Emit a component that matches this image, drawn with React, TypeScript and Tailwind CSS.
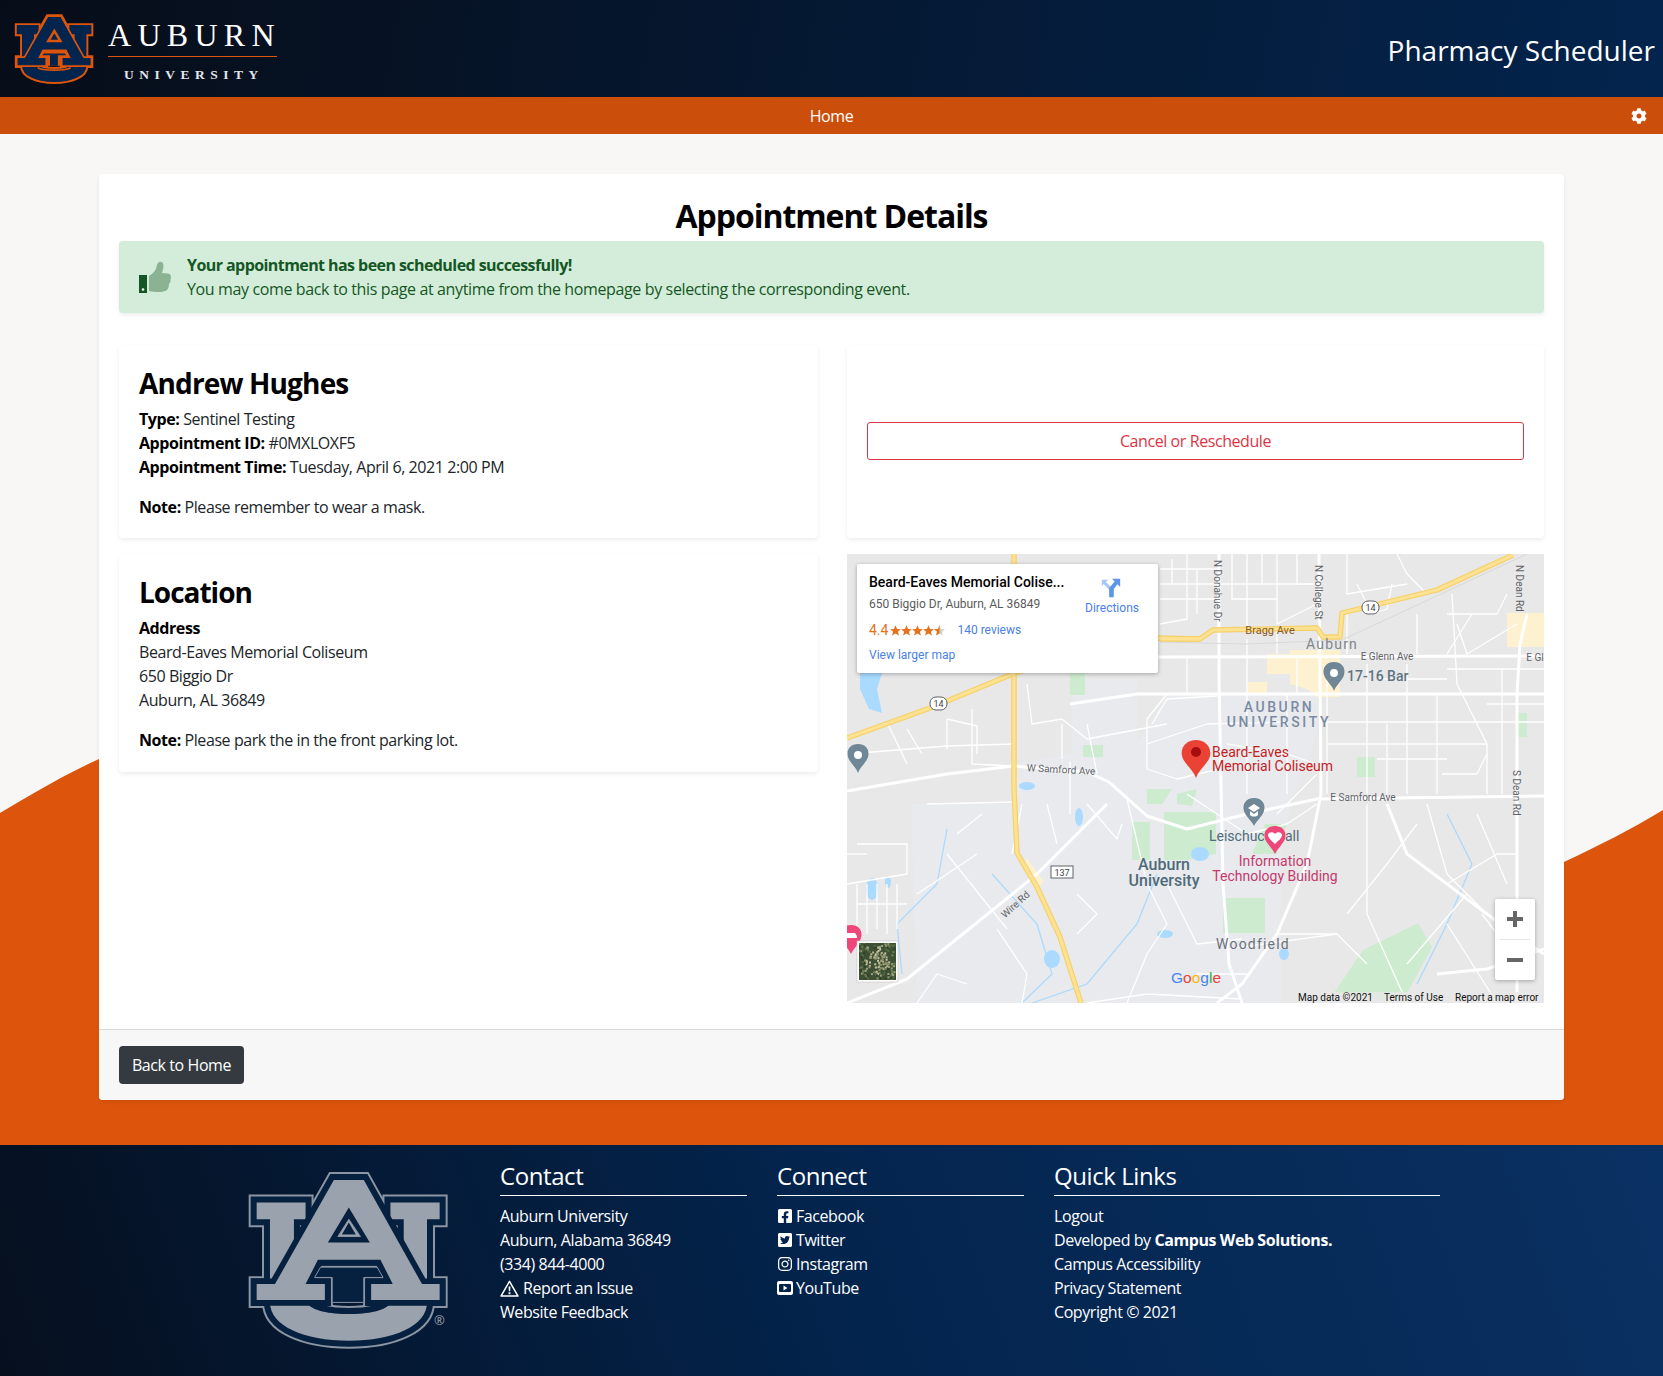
import React from "react";
import { FaCog, FaFacebookSquare, FaTwitterSquare, FaInstagram } from "react-icons/fa";

const FONT = "font-['Open_Sans','Noto_Sans',sans-serif]";

function AuLogo({ fill, band, line, className, small }: { fill: string; band: string; line: string; className: string; small?: boolean }) {
  const u1 = "M78,190 L225,190 L225,240 L190,240 L190,440 L118,440 L118,240 L78,240 Z";
  const u2 = "M480,190 L628,190 L628,240 L590,240 L590,440 L520,440 L520,240 L480,240 Z";
  const bowl = "M118,490 L230,490 C240,515 300,525 355,525 C410,525 470,515 480,490 L590,490 C590,560 490,605 355,605 C220,605 118,560 118,490 Z";
  const a = "M310,122 L400,122 L575,435 L628,435 L628,483 L422,483 L422,435 L487,435 L450,362 L262,362 L225,435 L283,435 L283,483 L78,483 L78,435 L133,435 Z";
  return (
    <svg viewBox="50 95 605 535" className={className}>
      <g stroke={line} strokeWidth={small ? 50 : 48} strokeLinejoin="miter" fill={line}>
        <path d={u1} /><path d={u2} /><path d={bowl} /><path d={a} />
      </g>
      <g stroke={band} strokeWidth={small ? 20 : 36} strokeLinejoin="miter" fill={band}>
        <path d={u1} /><path d={u2} /><path d={bowl} /><path d={a} />
      </g>
      <path d={u1} fill={fill} /><path d={u2} fill={fill} /><path d={bowl} fill={fill} />
      {small && <path d={a} fill={line} stroke={line} strokeWidth="34" strokeLinejoin="miter" />}
      <path d={a} fill={fill} stroke={small ? fill : band} strokeWidth={small ? 8 : 34} paintOrder="stroke" strokeLinejoin="miter" />
      {small ? (
        <>
          <path d="M355,205 L292,310 L418,310 Z" fill={line} />
          <path d="M355,243 L326,292 L384,292 Z" fill={fill} />
          <path d="M262,378 L448,378 L470,425 L400,425 L400,490 L305,490 L305,425 L240,425 Z" fill={line} />
          <path d="M275,396 L436,396 L445,410 L382,410 L382,490 L322,490 L322,410 L265,410 Z" fill={fill} />
          <path d="M228,505 C260,530 450,530 480,505" fill="none" stroke={line} strokeWidth="12" />
        </>
      ) : (
        <>
          <path d="M355,205 L292,310 L418,310 Z" fill={band} />
          <path d="M355,240 L322,292 L390,292 Z" fill={fill} stroke={line} strokeWidth="3" />
          <path d="M355,250 L334,286 L376,286 Z" fill={band} />
          <path d="M270,384 L440,384 L458,415 L400,415 L400,490 L305,490 L305,415 L252,415 Z" fill={band} stroke={line} strokeWidth="3" />
        </>
      )}
    </svg>
  );
}

const thick = [
  "313,85 353,85 366,76 470,74 476,83 493,83 495,59 590,36 666,1",
  "0,184 83,154 168,119 240,96 311,84 353,85",
  "167,0 167,235 170,299 190,333 213,383 234,449",
];
const wide = [
  "372,0 372,120 374,230 376,330 382,410 395,449",
  "472,0 473,120 474,240 460,310 430,380 395,430 370,449",
  "0,237 100,220 167,212 240,218 262,228 300,262 340,275 400,260 470,245 697,242",
  "223,150 290,140 340,140 697,140",
  "311,103 697,102",
  "0,449 60,425 168,338 190,320 260,250",
  "540,250 560,300 620,345 660,375 697,400",
  "590,420 640,415 697,395",
  "680,60 673,90 670,140 670,449",
];
const thin = [
  "340,0 340,65 313,70","400,0 400,75","430,0 430,70 470,50","500,0 500,40 560,30","313,30 450,30","550,0 560,20 580,40",
  "605,40 610,130 640,190 640,240","560,110 560,240","520,110 520,240","480,168 697,168","480,190 640,190","600,60 650,60 660,40",
  "625,60 600,100","440,140 440,240","400,140 400,240","300,190 360,170 440,168","305,170 320,145 370,142",
  "0,200 100,192 167,190","125,155 125,210 165,212","100,165 100,195","40,168 60,210","180,130 185,170 215,165 240,185 320,170",
  "223,208 223,260","240,170 250,220","380,190 440,200 470,210","340,240 400,280 440,270 470,250",
  "520,250 520,360 560,449","580,250 600,320 640,360","630,260 660,330","500,360 540,310 570,270","560,410 620,340",
  "600,370 650,449","635,360 680,420","430,380 490,380 520,410","380,395 490,380","320,330 350,390 395,385",
  "280,245 300,330 320,370 300,400 280,449","240,250 270,285 275,270","80,250 170,248","0,330 60,320 60,290 10,290","20,330 20,380",
  "40,330 40,380","10,350 60,350","100,300 160,375","70,340 130,300","150,375 180,420 175,449","70,449 90,420 120,430",
  "240,449 300,440 395,445","350,420 400,420","230,340 250,360 230,380","200,250 210,290","595,220 630,220 640,200","640,150 697,150","600,330 650,300 670,300",
  "313,15 372,15","313,45 372,45","350,15 350,60","325,5 325,30","385,0 385,45 430,45","415,0 415,30","450,0 450,30 472,30",
  "480,125 480,240","600,115 697,115","655,115 655,240","530,125 600,125","530,205 600,205","590,140 590,240","540,170 540,240",
  "300,190 300,215 330,225 372,215","320,140 300,165 300,190","100,165 130,172 130,200","60,175 75,200","215,170 215,205",
  "510,30 525,60 540,55 545,30","570,60 570,100","610,70 620,100 670,70","500,60 500,100","430,75 430,100","400,85 400,140","450,105 450,140","340,105 340,140",
  "10,330 10,375","30,330 30,375","50,330 50,375","0,300 20,300","175,250 165,300","110,280 135,260","430,260 470,220",
];

function MapSvg() {
  const sat: React.ReactNode[] = [];
  const cols = ["#8a8f6a", "#b4b48c", "#c6c4a4", "#6e7d52", "#566b42", "#9aa07a", "#2f4028", "#cfcdb0"];
  for (let i = 0; i < 170; i++) {
    const rx = Math.abs(Math.sin(i * 12.9898) * 43758.5453) % 1;
    const ry = Math.abs(Math.sin(i * 78.233) * 12543.123) % 1;
    const x = 12 + rx * 35;
    const y = 389 + ry * 35;
    const central = Math.abs(x - 30) + Math.abs(y - 406) < 15;
    sat.push(<rect key={i} x={x.toFixed(1)} y={y.toFixed(1)} width="2" height="2" fill={central ? cols[i % 3] : cols[3 + (i % 4)]} />);
  }
  const lab = "font-['Roboto',sans-serif]";
  return (
    <svg viewBox="0 0 697 449" className="absolute inset-0 w-full h-full tracking-normal">
      <rect width="697" height="449" fill="#e8e8e8" />
      <path d="M64,250 L165,250 L165,210 L225,200 L225,125 L290,125 L290,190 L320,140 L470,140 L470,180 L445,245 L434,300 L434,449 L70,449 Z" fill="#e8eaed" />
      <g fill="#cdeccf">
        <path d="M285,268 H303 V306 H285Z M317,258 H369 V300 L340,306 H317Z M376,344 H418 V379 H376Z M571,369 L585,393 L558,443 L535,446 L487,439 L516,396Z M223,119 H238 V141 H223Z M236,191 H256 V203 H236Z M510,203 H528 V223 H510Z M671,159 H680 V183 H671Z M418,270 H440 L430,300 H405Z M300,235 H325 L315,250 H300Z M330,240 L350,235 L345,252 L330,250Z" />
      </g>
      <g fill="#fdf1cf">
        <path d="M443,96 H493 V143 H470 L460,135 L443,130Z M401,128 H420 V139 H401Z M660,59 H697 V93 H660Z M179,303 L197,328 L190,333 L179,320Z M420,100 L445,100 V120 L420,120Z" />
      </g>
      <g fill="#aadaff">
        <path d="M13,119 L35,119 L30,135 L35,159 L22,155 L13,135Z" />
        <ellipse cx="232" cy="263" rx="4" ry="9" /><ellipse cx="353" cy="300" rx="9" ry="7" /><ellipse cx="318" cy="380" rx="8" ry="4" /><ellipse cx="205" cy="405" rx="8" ry="9" /><ellipse cx="25" cy="335" rx="6" ry="11" /><ellipse cx="41" cy="328" rx="3" ry="6" /><ellipse cx="437" cy="400" rx="5" ry="6" /><ellipse cx="180" cy="232" rx="8" ry="4" />
      </g>
      <g fill="none" stroke="#aadaff" strokeWidth="1.3">
        <polyline points="100,275 90,330 50,370 55,420" />
        <polyline points="310,320 290,370 240,430 185,449" />
        <polyline points="600,260 625,310 600,370 570,430" />
        <polyline points="145,320 190,370 205,420 175,449" />
      </g>
      <g fill="none" stroke="#ffffff" strokeLinejoin="round">
        {thin.map((p, i) => <polyline key={i} points={p} strokeWidth="1.3" />)}
        {wide.map((p, i) => <polyline key={i} points={p} strokeWidth="3" />)}
      </g>
      <polyline points="313,88 400,90 495,86 680,0" fill="none" stroke="#d8d8d8" strokeWidth="1" />
      <g fill="none" strokeLinejoin="round">
        {thick.map((p, i) => <polyline key={i} points={p} stroke="#f6cf65" strokeWidth="5.4" />)}
        {thick.map((p, i) => <polyline key={i} points={p} stroke="#fde293" strokeWidth="3.2" />)}
      </g>

      <g className={lab} textAnchor="middle">
        <g fontSize="10" fill="#5f6368">
          <text x="0" y="0" transform="translate(367,6) rotate(90)" textAnchor="start">N Donahue Dr</text>
          <text x="0" y="0" transform="translate(468,11) rotate(90)" textAnchor="start">N College St</text>
          <text x="0" y="0" transform="translate(669,11) rotate(90)" textAnchor="start">N Dean Rd</text>
          <text x="0" y="0" transform="translate(666,216) rotate(90)" textAnchor="start">S Dean Rd</text>
          <text x="168" y="354" transform="rotate(-42 168 350)">Wire Rd</text>
          <text x="214" y="219" transform="rotate(3 214 216)">W Samford Ave</text>
          <text x="540" y="106">E Glenn Ave</text>
          <text x="688" y="107">E Gl</text>
          <text x="516" y="247">E Samford Ave</text>
        </g>
        <text x="423" y="80" fontSize="11" fill="#8a5a22">Bragg Ave</text>
        <text x="485" y="95" fontSize="14" letterSpacing="1.2" fill="#80868b">Auburn</text>
        <text x="432" y="158" fontSize="14" fontWeight="500" letterSpacing="2.6" fill="#7b8aa3">AUBURN</text>
        <text x="432" y="173" fontSize="14" fontWeight="500" letterSpacing="2.6" fill="#7b8aa3">UNIVERSITY</text>
        <text x="406" y="395" fontSize="14" letterSpacing="1.2" fill="#6b7079">Woodfield</text>
        <text x="317" y="316" fontSize="16" fontWeight="500" fill="#4f6b7a">Auburn</text>
        <text x="317" y="332" fontSize="16" fontWeight="500" fill="#4f6b7a">University</text>
        <text x="428" y="312" fontSize="14" fill="#c5386d">Information</text>
        <text x="428" y="327" fontSize="14" fill="#c5386d">Technology Building</text>
        <text x="362" y="287" fontSize="14" fill="#4f6b7a" textAnchor="start">Leischuc</text>
        <text x="438" y="287" fontSize="14" fill="#4f6b7a" textAnchor="start">all</text>
        <text x="661" y="403" fontSize="14" fill="#80868b">la</text>
      </g>
      <text x="500" y="127" fontSize="14" fontWeight="500" fill="#5f7482" className={lab}>17-16 Bar</text>
      <g fontSize="14" fill="#c5221f" className={lab}>
        <text x="365" y="203">Beard-Eaves</text>
        <text x="365" y="217">Memorial Coliseum</text>
      </g>

      <g>
        <rect x="83" y="143" width="17" height="13" rx="6" fill="#fff" stroke="#5f6368" />
        <text x="91.5" y="153" fontSize="9" textAnchor="middle" fill="#3c4043" className={lab}>14</text>
        <rect x="515" y="47" width="17" height="13" rx="6" fill="#fff" stroke="#5f6368" />
        <text x="523.5" y="57" fontSize="9" textAnchor="middle" fill="#3c4043" className={lab}>14</text>
        <rect x="204" y="312" width="22" height="12" fill="#fff" stroke="#5f6368" />
        <text x="215" y="322" fontSize="9" textAnchor="middle" fill="#3c4043" className={lab}>137</text>
      </g>

      <g fill="#6f8796">
        <path d="M11,190 C3,190 -1,196 1,203 C3,209 9,213 11,219 C13,213 19,209 21,203 C23,196 19,190 11,190Z" />
        <path d="M487,108 C479,108 475,114 477,121 C479,127 485,131 487,137 C489,131 495,127 497,121 C499,114 495,108 487,108Z" />
        <path d="M407,244 C399,244 395,250 397,257 C399,263 405,267 407,272 C409,267 415,263 417,257 C419,250 415,244 407,244Z" />
      </g>
      <circle cx="11" cy="201" r="4" fill="#fff" /><circle cx="487" cy="119" r="4" fill="#fff" />
      <path d="M407,250 L413,254 L407,258 L401,254Z M403,257 V261 C405,263 409,263 411,261 V257 L407,260Z" fill="#fff" />

      <path d="M349,186 C340,186 333,193 335,202 C337,210 346,215 349,224 C352,215 361,210 363,202 C365,193 358,186 349,186Z" fill="#ea4335" />
      <circle cx="349" cy="198" r="5" fill="#a50e0e" />
      <path d="M428,272 C420,272 416,278 418,285 C420,290 425,294 428,300 C431,294 436,290 438,285 C440,278 436,272 428,272Z" fill="#f0477b" />
      <path d="M428,290 C424,286 421,284 421,281 C421,278 426,277 428,280 C430,277 435,278 435,281 C435,284 432,286 428,290Z" fill="#fff" />
      <path d="M4,371 C-4,371 -8,377 -6,384 C-4,390 1,394 4,400 C7,394 12,390 14,384 C16,377 12,371 4,371Z" fill="#f0477b" />
      <path d="M0,379 H8 L10,382 V384 H0Z" fill="#fff" />

      <rect x="10" y="387" width="41" height="41" fill="#fff" stroke="#bbb" strokeWidth=".5" />
      <svg x="12" y="389" width="37" height="37" viewBox="12 389 37 37">
        <rect x="12" y="389" width="37" height="37" fill="#3e5034" />
        {sat}
      </svg>

      <g fontSize="15.5" fontWeight="500" className="font-['Liberation_Sans',sans-serif]">
        <text x="324" y="429"><tspan fill="#4285f4">G</tspan><tspan fill="#ea4335">o</tspan><tspan fill="#fbbc05">o</tspan><tspan fill="#4285f4">g</tspan><tspan fill="#34a853">l</tspan><tspan fill="#ea4335">e</tspan></text>
      </g>
      <rect x="450" y="438" width="247" height="11" fill="#e8e8e8" fillOpacity=".75" />
      <g fontSize="10" fill="#111" className={lab}>
        <text x="451" y="447">Map data ©2021</text>
        <text x="537" y="447">Terms of Use</text>
        <text x="608" y="447">Report a map error</text>
      </g>
    </svg>
  );
}

function Star({ half }: { half?: boolean }) {
  return (
    <svg viewBox="0 0 10 10" className="w-[11px] h-[11px]">
      <path d="M5,0.3 L6.4,3.6 L9.9,3.9 L7.2,6.2 L8.1,9.6 L5,7.8 L1.9,9.6 L2.8,6.2 L0.1,3.9 L3.6,3.6Z" fill={half ? "#d0d0d0" : "#e7711b"} />
      {half && <path d="M5,0.3 L5,7.8 L1.9,9.6 L2.8,6.2 L0.1,3.9 L3.6,3.6Z" fill="#e7711b" />}
    </svg>
  );
}

function FooterCol({ title, className, children }: { title: string; className: string; children: React.ReactNode }) {
  return (
    <div className={className}>
      <h5 className="text-[24px] leading-[28px] text-white pb-[5px] border-b border-white mb-[8px] mt-[17px]">{title}</h5>
      <div className="text-[16px] leading-[24px] text-white">{children}</div>
    </div>
  );
}

function Row({ gap, children }: { gap: string; children: React.ReactNode }) {
  return <div className={`flex items-center ${gap}`}>{children}</div>;
}

export default function App() {
  const card = "bg-white rounded shadow-[0_2px_4px_rgba(0,0,0,0.075)]";
  const strong = "text-black font-bold";
  return (
    <div className={`${FONT} relative min-h-[1376px] bg-[#f8f7f5] text-[16px] leading-[24px] text-[#212529] tracking-[-0.42px] overflow-hidden`}>
      <svg viewBox="0 0 1663 1376" className="absolute inset-0 w-[1663px] h-[1376px]">
        <path d="M0,813 C40,789 70,772 99,759 C500,590 1100,1090 1564,862 C1600,845 1630,830 1663,810 L1663,1376 L0,1376 Z" fill="#dd550c" />
      </svg>
      <header className="relative h-[97px] flex items-center justify-between bg-[linear-gradient(100deg,#070d18_0%,#03244d_100%)]">
        <div className="flex items-start pl-[14px] pt-[1px]">
          <AuLogo small fill="#03244d" band="#03244d" line="#dd550c" className="w-[80px] h-[70px]" />
          <div className="ml-[14px] w-[169px] font-['Liberation_Serif',serif] text-white tracking-normal">
            <div className="text-[32px] leading-[32px] pt-[5px] pb-[4px] border-b border-[#dd550c] tracking-[6.3px] whitespace-nowrap h-[43px] text-left">AUBURN</div>
            <div className="text-[13.5px] leading-[16px] pt-[10px] pl-[16px] tracking-[5.5px] whitespace-nowrap font-bold text-[#e4e6ea] text-left">UNIVERSITY</div>
          </div>
        </div>
        <div className="text-white text-[28px] leading-[36px] pr-[8px] pt-[2px] tracking-normal">Pharmacy Scheduler</div>
      </header>
      <nav className="relative h-[37px] bg-[#cc4e0b] flex items-center justify-center text-white">
        <span>Home</span>
        <FaCog className="absolute right-[16px] top-[11px] w-[16px] h-[16px]" />
      </nav>
      <main className="relative px-[99px] pt-[40px] pb-[45px]">
        <div className={`${card} flex flex-col`}>
          <div className="px-[20px] pt-[20px] pb-[26px]">
            <h1 className="text-[32px] leading-[43px] font-bold text-center text-black mb-[4px] tracking-[-1.05px]">Appointment Details</h1>
            <div className="h-[72px] bg-[#d4edda] rounded shadow-[0_2px_4px_rgba(0,0,0,0.075)] flex items-center px-[20px] text-[#155724] tracking-[-0.37px]">
              <svg viewBox="0 0 32 32" className="w-[32px] h-[32px] mr-[16px] shrink-0">
                <path d="M0,14 H8 V32 H0Z" fill="#155724" />
                <circle cx="4" cy="28.5" r="1.3" fill="#fff" />
                <path d="M10,15 C15,12 17,9 18,4 C19,-1 25,0 24.5,5 C24.2,8 23.5,10 23,12 L29,12.5 C32,13 32.5,16 31.5,18 C32,20 31,22 30,23 C30,26 29,28 28,29 C26,31 18,32 10,30Z" fill="#8ab394" />
              </svg>
              <div>
                <div className="font-bold tracking-[-0.57px]">Your appointment has been scheduled successfully!</div>
                <div>You may come back to this page at anytime from the homepage by selecting the corresponding event.</div>
              </div>
            </div>
            <div className="grid grid-cols-[699px_697px] gap-x-[29px] mt-[32px]">
              <div className="flex flex-col gap-[16px] mb-0">
                <section className={`${card} h-[193px] px-[20px] pt-[18px]`}>
                  <h2 className="text-[28px] leading-[40px] font-bold text-black mb-[4px] tracking-[-0.85px]">Andrew Hughes</h2>
                  <p><b className={strong}>Type:</b> Sentinel Testing</p>
                  <p><b className={strong}>Appointment ID:</b> #0MXLOXF5</p>
                  <p><b className={strong}>Appointment Time:</b> Tuesday, April 6, 2021 2:00 PM</p>
                  <p className="mt-[16px]"><b className={strong}>Note:</b> Please remember to wear a mask.</p>
                </section>
                <section className={`${card} h-[218px] px-[20px] pt-[18px]`}>
                  <h2 className="text-[28px] leading-[40px] font-bold text-black mb-[4px] tracking-[-1px]">Location</h2>
                  <p className={strong}>Address</p>
                  <p>Beard-Eaves Memorial Coliseum</p>
                  <p>650 Biggio Dr</p>
                  <p>Auburn, AL 36849</p>
                  <p className="mt-[16px]"><b className={strong}>Note:</b> Please park the in the front parking lot.</p>
                </section>
              </div>
              <div className="flex flex-col gap-[16px]">
                <section className={`${card} h-[193px] px-[20px] pb-[2px] flex items-center`}>
                  <button className="w-full h-[38px] border border-[#dc3545] rounded-[3px] text-[#dc3545] text-center bg-white">Cancel or Reschedule</button>
                </section>
                <div className="relative h-[449px] overflow-hidden">
                  <MapSvg />
                  <div className="absolute left-[10px] top-[10px] w-[301px] h-[109px] bg-white rounded-[2px] shadow-[0_1px_4px_rgba(0,0,0,0.3)] font-['Roboto',sans-serif] tracking-normal text-[12px] leading-[16px] text-[#5b5b5b]">
                    <div className="absolute left-[12px] top-[9px] text-[14px] font-medium leading-[18px] text-black whitespace-nowrap">Beard-Eaves Memorial Colise...</div>
                    <div className="absolute left-[12px] top-[32px] whitespace-nowrap">650 Biggio Dr, Auburn, AL 36849</div>
                    <div className="absolute left-[12px] top-[58px] flex items-center whitespace-nowrap">
                      <span className="text-[14px] text-[#e7711b] mr-[2px]">4.4</span>
                      <Star /><Star /><Star /><Star /><Star half />
                      <span className="text-[#4a80e8] ml-[12px]">140 reviews</span>
                    </div>
                    <div className="absolute left-[12px] top-[83px] text-[#4a80e8]">View larger map</div>
                    <svg viewBox="0 0 24 24" className="absolute left-[243px] top-[13px] w-[22px] h-[22px]">
                      <path d="M2,3 L9,3 L6.5,5.5 L12,11 L10,14 L4,7.5 L2,10Z" fill="#a9c6f5" />
                      <path d="M22,2 L22,11 L19,8 L15,13 L15,22 L10,22 L10,12 L16,5 L13,2Z" fill="#5c95ea" />
                    </svg>
                    <div className="absolute left-[215px] top-[36px] w-[80px] text-center text-[#4a80e8]">Directions</div>
                  </div>
                  <div className="absolute left-[648px] top-[345px] w-[40px] h-[81px] bg-white rounded-[2px] shadow-[0_1px_4px_rgba(0,0,0,0.3)] flex flex-col items-center">
                    <svg viewBox="0 0 40 40" className="w-[40px] h-[40px]"><path d="M12,20 H28 M20,12 V28" stroke="#666" strokeWidth="4" /></svg>
                    <div className="w-[30px] h-px bg-[#e6e6e6]" />
                    <svg viewBox="0 0 40 40" className="w-[40px] h-[40px]"><path d="M12,20 H28" stroke="#666" strokeWidth="4" /></svg>
                  </div>
                </div>
              </div>
            </div>
          </div>
          <div className="h-[71px] bg-[#f7f7f7] border-t border-[#d9d9d9] rounded-b px-[20px] pt-[16px]">
            <button className="w-[125px] h-[38px] rounded bg-[#343a40] text-white">Back to Home</button>
          </div>
        </div>
      </main>
      <footer className="relative h-[231px] bg-[linear-gradient(70deg,#060f1e_0%,#03244d_50%,#0a3163_100%)] flex">
        <AuLogo fill="#9aa2ad" band="#06203f" line="#8b95a3" className="w-[202px] h-[178px] ml-[247px] mt-[26px]" />
        <div className="relative">
          <span className="absolute left-[-15px] top-[163px] text-[13px] text-[#9aa2ad] tracking-normal">®</span>
        </div>
        <FooterCol title="Contact" className="w-[247px] ml-[51px]">
          <div>Auburn University</div>
          <div>Auburn, Alabama 36849</div>
          <div>(334) 844-4000</div>
          <Row gap="gap-[4px]">
            <svg viewBox="0 0 20 18" className="w-[19px] h-[17px]"><path d="M10,1.5 L19,17 H1Z" fill="none" stroke="#fff" strokeWidth="1.6" strokeLinejoin="round" /><path d="M9,7 H11 L10.7,12 H9.3Z M9,13 H11 V15 H9Z" fill="#fff" /></svg>
            <span>Report an Issue</span>
          </Row>
          <div>Website Feedback</div>
        </FooterCol>
        <FooterCol title="Connect" className="w-[247px] ml-[30px]">
          <Row gap="gap-[3px]"><FaFacebookSquare className="w-[16px] h-[16px]" /><span>Facebook</span></Row>
          <Row gap="gap-[3px]"><FaTwitterSquare className="w-[16px] h-[16px]" /><span>Twitter</span></Row>
          <Row gap="gap-[3px]"><FaInstagram className="w-[16px] h-[16px]" /><span>Instagram</span></Row>
          <Row gap="gap-[3px]">
            <svg viewBox="0 0 16 16" className="w-[16px] h-[16px]"><path fillRule="evenodd" d="M2,1 H14 A2,2 0 0 1 16,3 V13 A2,2 0 0 1 14,15 H2 A2,2 0 0 1 0,13 V3 A2,2 0 0 1 2,1Z M3,4 A1,1 0 0 0 2,5 V11 A1,1 0 0 0 3,12 H13 A1,1 0 0 0 14,11 V5 A1,1 0 0 0 13,4Z" fill="#fff" /><path d="M6.5,5.5 L10.5,8 L6.5,10.5Z" fill="#fff" /></svg>
            <span>YouTube</span>
          </Row>
        </FooterCol>
        <FooterCol title="Quick Links" className="w-[386px] ml-[30px]">
          <div>Logout</div>
          <div>Developed by <b className="font-bold">Campus Web Solutions.</b></div>
          <div>Campus Accessibility</div>
          <div>Privacy Statement</div>
          <div>Copyright © 2021</div>
        </FooterCol>
      </footer>
    </div>
  );
}
